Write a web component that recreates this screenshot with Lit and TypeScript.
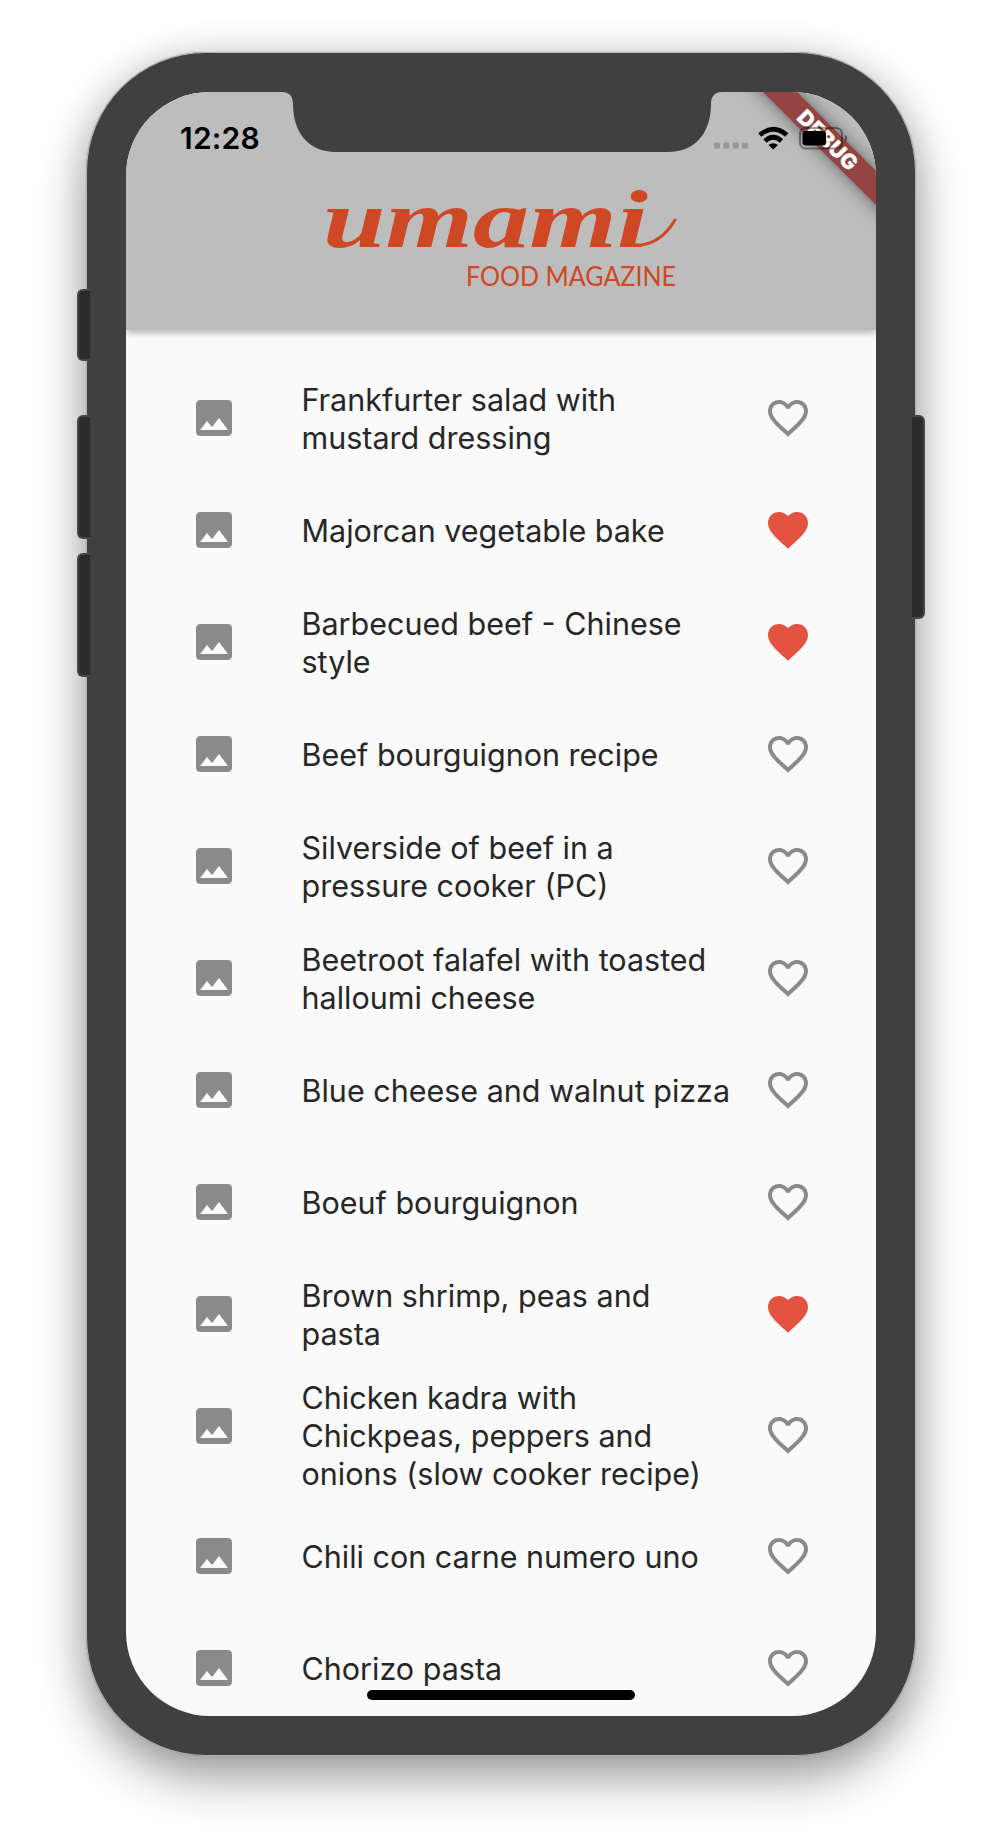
import { LitElement, html, css, svg } from "lit";
import { customElement, property } from "lit/decorators.js";

interface Recipe {
  title: string;
  liked: boolean;
}

const RECIPES: Recipe[] = [
  { title: "Frankfurter salad with\nmustard dressing", liked: false },
  { title: "Majorcan vegetable bake", liked: true },
  { title: "Barbecued beef - Chinese\nstyle", liked: true },
  { title: "Beef bourguignon recipe", liked: false },
  { title: "Silverside of beef in a\npressure cooker (PC)", liked: false },
  { title: "Beetroot falafel with toasted\nhalloumi cheese", liked: false },
  { title: "Blue cheese and walnut pizza", liked: false },
  { title: "Boeuf bourguignon", liked: false },
  { title: "Brown shrimp, peas and\npasta", liked: true },
  { title: "Chicken kadra with\nChickpeas, peppers and\nonions (slow cooker recipe)", liked: false },
  { title: "Chili con carne numero uno", liked: false },
  { title: "Chorizo pasta", liked: false },
];

const HEART = svg`<path d="M12 21.35l-1.45-1.32C5.4 15.36 2 12.28 2 8.5 2 5.42 4.42 3 7.5 3c1.74 0 3.41.81 4.5 2.09C13.09 3.81 14.76 3 16.5 3 19.58 3 22 5.42 22 8.5c0 3.78-3.4 6.86-8.55 11.54L12 21.35z"/>`;
const HEART_OUTLINE = svg`<path d="M16.5 3c-1.74 0-3.41.81-4.5 2.09C10.91 3.81 9.24 3 7.5 3 4.42 3 2 5.42 2 8.5c0 3.78 3.4 6.86 8.55 11.54L12 21.35l1.45-1.32C18.6 15.36 22 12.28 22 8.5 22 5.42 19.58 3 16.5 3zm-4.4 15.55l-.1.1-.1-.1C7.14 14.24 4 11.39 4 8.5 4 6.5 5.5 5 7.5 5c1.54 0 3.04.99 3.57 2.36h1.87C13.46 5.99 14.96 5 16.5 5c2 0 3.5 1.5 3.5 3.5 0 2.89-3.14 5.74-7.9 10.05z"/>`;

@customElement("recipe-tile")
export class RecipeTile extends LitElement {
  @property({ attribute: false }) recipe!: Recipe;

  static styles = css`
    :host {
      display: flex;
      align-items: center;
      box-sizing: border-box;
      min-height: 112px;
      padding: 7px 64px;
    }
    .icon {
      flex: none;
      width: 48px;
      height: 48px;
      fill: #8a8a8a;
    }
    .thumb {
      align-self: flex-start;
      margin-top: 25px;
    }
    .title {
      flex: 1;
      margin-left: 63.5px;
      padding-top: 2px;
      white-space: pre;
      font-size: 30.5px;
      line-height: 38px;
      letter-spacing: 0;
      color: #272727;
    }
    .liked {
      fill: #e25241;
    }
  `;

  render() {
    const { title, liked } = this.recipe;
    return html`
      <svg class="icon thumb" viewBox="0 0 24 24">
        <path d="M21 19V5c0-1.1-.9-2-2-2H5c-1.1 0-2 .9-2 2v14c0 1.1.9 2 2 2h14c1.1 0 2-.9 2-2z" />
        <path fill="#fafafa" d="M8.5 13.5l2.5 3.01L14.5 12l4.5 6H5l3.5-4.5z" />
      </svg>
      <div class="title">${title}</div>
      <svg class="icon ${liked ? "liked" : ""}" viewBox="0 0 24 24">${liked ? HEART : HEART_OUTLINE}</svg>
    `;
  }
}

@customElement("app-root")
export class AppRoot extends LitElement {
  static styles = css`
    :host {
      display: block;
      box-sizing: border-box;
      height: 1840px;
      padding: 52px 86px 0;
      overflow: hidden;
      background: #fff;
      font-family: Inter, "Liberation Sans", sans-serif;
    }
    .phone {
      position: relative;
      box-sizing: border-box;
      width: 830px;
      height: 1704px;
      padding: 39px;
      border: 1px solid #b4b4b4;
      border-radius: 120px;
      background: #404040;
      box-shadow: 0 0 1px #888, 0 22px 50px rgba(0, 0, 0, 0.36), 0 2px 36px rgba(0, 0, 0, 0.12);
    }
    .key {
      position: absolute;
      box-sizing: border-box;
      width: 13px;
      background: #2c2c2c;
      border: 2px solid #464646;
    }
    .left {
      left: -10px;
      border-right: 0;
      border-radius: 6px 0 0 6px;
    }
    .right {
      right: -10px;
      border-left: 0;
      border-radius: 0 6px 6px 0;
    }
    .mute { top: 236px; height: 72px; }
    .up { top: 362px; height: 124px; }
    .down { top: 500px; height: 124px; }
    .power { top: 362px; height: 204px; }
    .screen {
      position: relative;
      display: flex;
      flex-direction: column;
      width: 750px;
      height: 1624px;
      overflow: hidden;
      border-radius: 84px;
      background: #fafafa;
    }
    .header {
      flex: none;
      height: 238px;
      background: #bdbdbd;
      box-shadow: 0 3px 6px rgba(0, 0, 0, 0.2), 0 2px 10px rgba(0, 0, 0, 0.1);
    }
    .logo {
      display: block;
      width: 750px;
      height: 238px;
      fill: #cf4824;
    }
    .wordmark {
      font: italic bold 83px "Liberation Serif", serif;
    }
    .tagline {
      font: 26px Lato, sans-serif;
    }
    .swash {
      fill: none;
      stroke: #cf4824;
      stroke-width: 3;
      stroke-linecap: round;
    }
    .list {
      display: flex;
      flex-direction: column;
      padding-top: 32px;
    }
    .notch {
      position: absolute;
      top: 0;
      left: 0;
      width: 750px;
      height: 62px;
      fill: #404040;
    }
    .banner {
      position: absolute;
      left: 582px;
      top: 36px;
      width: 240px;
      height: 24px;
      transform: rotate(45deg);
      background: rgba(135, 30, 28, 0.76);
      box-shadow: 0 0 18px rgba(0, 0, 0, 0.5);
      color: #fff;
      font-size: 21.5px;
      font-weight: 900;
      line-height: 24px;
      letter-spacing: 0.2px;
      text-align: center;
    }
    .clock {
      position: absolute;
      left: 54px;
      top: 28px;
      font-size: 30px;
      font-weight: 600;
      line-height: 36px;
      letter-spacing: 0.2px;
      color: #000;
    }
    .status {
      position: absolute;
      left: 586px;
      top: 30px;
      width: 140px;
      height: 32px;
    }
    .home {
      position: absolute;
      left: 241px;
      bottom: 16px;
      width: 268px;
      height: 10px;
      border-radius: 5px;
      background: #000;
    }
  `;

  render() {
    return html`
      <div class="phone">
        <div class="key left mute"></div>
        <div class="key left up"></div>
        <div class="key left down"></div>
        <div class="key right power"></div>
        <div class="screen">
          <div class="header">
            <svg class="logo" viewBox="0 0 750 238">
              <text class="wordmark" x="197" y="155" textLength="325" lengthAdjust="spacingAndGlyphs">umami</text>
              <path class="swash" d="M511 153.5Q535 152 549 128" />
              <text class="tagline" x="340" y="194" textLength="210" lengthAdjust="spacingAndGlyphs">FOOD MAGAZINE</text>
            </svg>
          </div>
          <div class="list">${RECIPES.map((r) => html`<recipe-tile .recipe=${r}></recipe-tile>`)}</div>
          <svg class="notch" viewBox="0 0 750 62">
            <path d="M156 0C163 0 167 4 167 12C167 40 182 60 210 60H542C570 60 585 40 585 12C585 4 589 0 596 0Z" />
          </svg>
          <div class="banner">DEBUG</div>
          <div class="clock">12:28</div>
          <svg class="status" viewBox="586 30 140 32">
            <g fill="#979797">
              <rect x="588" y="50.5" width="6" height="6" rx="1.5" />
              <rect x="597.3" y="50.5" width="6" height="6" rx="1.5" />
              <rect x="606.7" y="50.5" width="6" height="6" rx="1.5" />
              <rect x="616" y="50.5" width="6" height="6" rx="1.5" />
            </g>
            <g fill="none" stroke="#000" stroke-width="4.6">
              <path d="M633.8 43Q647.3 31.5 660.8 43" />
              <path d="M639 49Q647.3 41.5 655.5 49" />
            </g>
            <path d="M642.5 53Q647.3 49.5 652 53L647.3 57.5Z" />
            <rect x="674" y="36" width="42" height="20.5" rx="5.5" fill="none" stroke="#000" stroke-opacity="0.4" stroke-width="2" />
            <path d="M719 42.5Q723.5 46 719 50Z" fill-opacity="0.45" />
            <rect x="676.5" y="39" width="23.5" height="14.5" rx="3" />
          </svg>
          <div class="home"></div>
        </div>
      </div>
    `;
  }
}
